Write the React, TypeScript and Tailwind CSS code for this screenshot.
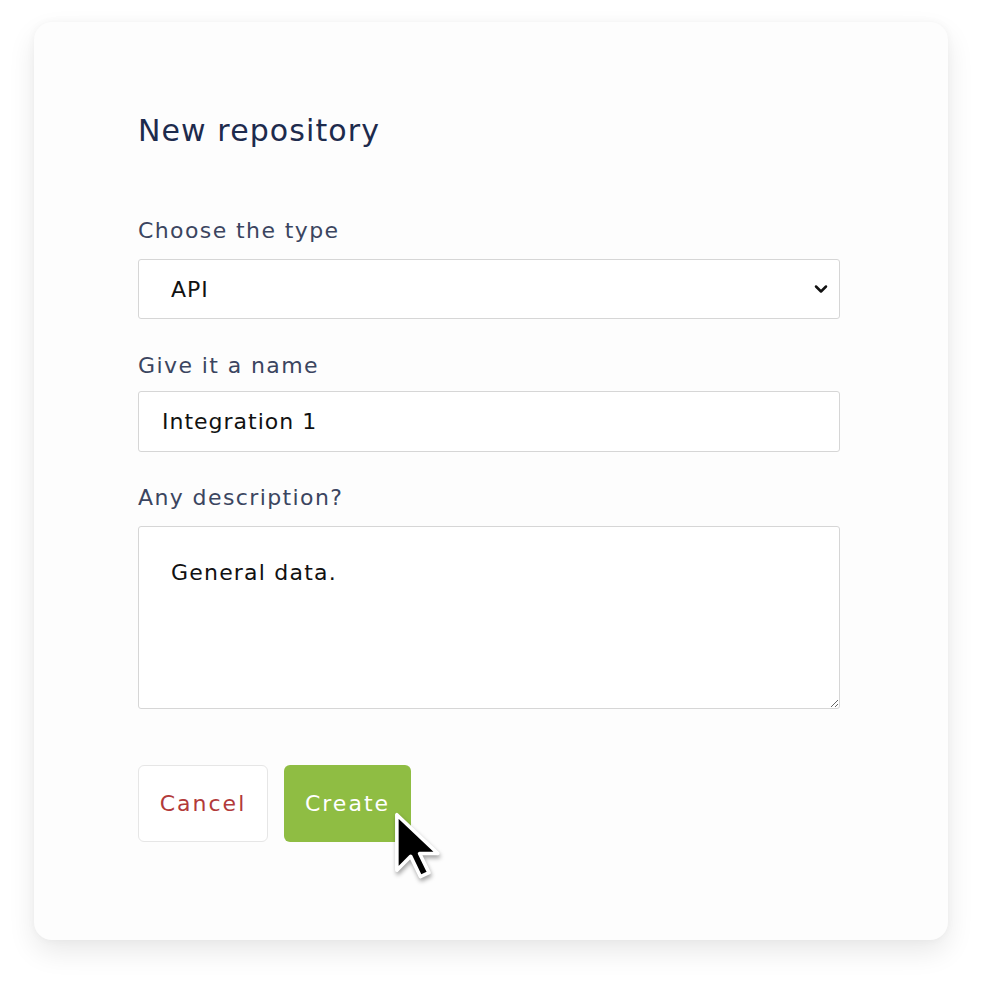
import { ChevronDown } from "lucide-react";

const font = { fontFamily: "'DejaVu Sans', 'Open Sans', sans-serif" };

function Cursor() {
  return (
    <svg width="50" height="72" viewBox="0 0 18 26" className="absolute left-[110px] top-[47px] drop-shadow-[1px_3px_2px_rgba(0,0,0,0.35)]">
      <path d="M1 1 L1 21 L6 16 L9.5 23.3 L12.6 21.9 L9.2 15 L15.8 15 Z" fill="#000" stroke="#fff" strokeWidth="1.3" strokeLinejoin="round" />
    </svg>
  );
}

export default function App() {
  return (
    <div className="min-h-[990px] w-[983px] bg-white pt-[22px] pl-[34px]" style={font}>
      <div className="w-[914px] h-[918px] bg-[#fdfdfd] rounded-[18px] shadow-[0_12px_28px_rgba(0,0,0,0.09),0_0_8px_rgba(0,0,0,0.04)] pl-[104px] pr-[108px] pt-[86px]">
        <h1 className="text-[30px] leading-[46px] font-medium tracking-[1.1px] text-[#1d2b4d]">New repository</h1>

        <div className="mt-[62px] flex flex-col">
          <label className="text-[22px] leading-[30px] tracking-[1.4px] text-[#3b4560]">Choose the type</label>
          <div className="relative mt-[13px]">
            <select defaultValue="API" className="appearance-none w-full h-[60px] border border-[#d6d6d6] rounded-[3px] bg-white pl-[32px] text-[22px] tracking-[1px] text-[#111] outline-none">
              <option>API</option>
            </select>
            <ChevronDown size={20} strokeWidth={3} className="absolute right-[9px] top-[20px] text-[#111] pointer-events-none" />
          </div>

          <label className="mt-[32px] text-[22px] leading-[30px] tracking-[1.4px] text-[#3b4560]">Give it a name</label>
          <input defaultValue="Integration 1" className="mt-[10px] w-full h-[61px] border border-[#d6d6d6] rounded-[3px] bg-white pl-[23px] text-[22px] tracking-[1px] text-[#111] outline-none" />

          <label className="mt-[31px] text-[22px] leading-[30px] tracking-[1.4px] text-[#3b4560]">Any description?</label>
          <textarea defaultValue="General data." className="mt-[13px] w-full h-[183px] border border-[#d6d6d6] rounded-[3px] bg-white px-[32px] pt-[31px] text-[22px] leading-[30px] tracking-[1.2px] text-[#111] outline-none" />

          <div className="mt-[56px] flex gap-[16px]">
            <button className="w-[130px] h-[77px] rounded-[6px] border border-[#e6e6e6] bg-white text-[22px] tracking-[2px] text-[#b23a3a]">Cancel</button>
            <div className="relative">
              <button className="w-[127px] h-[77px] rounded-[6px] bg-[#8fbd43] text-[22px] tracking-[2px] text-white">Create</button>
              <Cursor />
            </div>
          </div>
        </div>
      </div>
    </div>
  );
}
